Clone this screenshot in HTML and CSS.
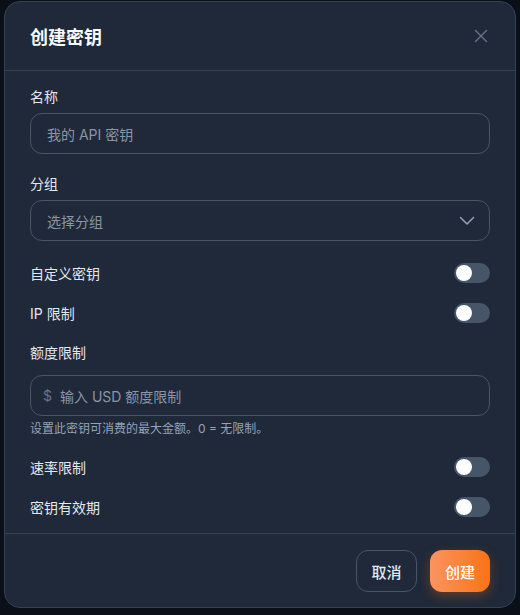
FILE: index.html
```html
<!DOCTYPE html>
<html lang="zh-CN">

<head>
    <meta charset="UTF-8">
    <title>创建密钥</title>
    <link rel="stylesheet" href="styles.css">
</head>

<body>
    <div class="modal">
        <div class="modal-header">
            <h2>创建密钥</h2>
            <button class="close-btn" aria-label="关闭">
                <svg width="14" height="14" viewBox="0 0 14 14" fill="none" stroke="currentColor" stroke-width="1.4" stroke-linecap="round">
                    <path d="M1.5 1.5 L12.5 12.5 M12.5 1.5 L1.5 12.5" />
                </svg>
            </button>
        </div>

        <div class="modal-body">
            <div class="field">
                <label class="field-label">名称</label>
                <div class="input-box">
                    <span class="placeholder">我的 API 密钥</span>
                </div>
            </div>

            <div class="field group">
                <label class="field-label">分组</label>
                <div class="input-box select">
                    <span class="placeholder">选择分组</span>
                    <svg class="chevron" width="16" height="10" viewBox="0 0 16 10" fill="none" stroke="currentColor" stroke-width="1.5" stroke-linecap="round" stroke-linejoin="round">
                        <path d="M1.5 1.5 L8 8 L14.5 1.5" />
                    </svg>
                </div>
            </div>

            <div class="toggle-row">
                <span>自定义密钥</span>
                <span class="toggle"><span class="knob"></span></span>
            </div>

            <div class="toggle-row">
                <span>IP 限制</span>
                <span class="toggle"><span class="knob"></span></span>
            </div>

            <div class="field quota">
                <label class="field-label">额度限制</label>
                <div class="input-box">
                    <span class="prefix">$</span>
                    <span class="placeholder">输入 USD 额度限制</span>
                </div>
                <p class="help">设置此密钥可消费的最大金额。0 = 无限制。</p>
            </div>

            <div class="toggle-row">
                <span>速率限制</span>
                <span class="toggle"><span class="knob"></span></span>
            </div>

            <div class="toggle-row">
                <span>密钥有效期</span>
                <span class="toggle"><span class="knob"></span></span>
            </div>
        </div>

        <div class="modal-footer">
            <button class="btn btn-cancel">取消</button>
            <button class="btn btn-primary">创建</button>
        </div>
    </div>
</body>

</html>
```

FILE: styles.css
```css
body {
    font-family: 'Inter', 'Noto Sans CJK SC', sans-serif;
    background-color: #0b0f18;
    margin: 0;
    padding: 1px 4px 0 4px;
    height: 614px;
    overflow: hidden;
}

.modal {
    background-color: #1f2939;
    border: 1px solid #334155;
    border-radius: 16px;
    height: 607px;
    box-sizing: border-box;
    display: flex;
    flex-direction: column;
}

.modal-header {
    flex-shrink: 0;
    display: flex;
    justify-content: space-between;
    align-items: center;
    height: 68px;
    padding: 0 27px 0 25px;
    border-bottom: 1px solid #334155;
}

.modal-header h2 {
    margin: 0;
    font-size: 18px;
    font-weight: 700;
    color: #f8fafc;
}

.close-btn {
    background: none;
    border: none;
    padding: 0;
    color: #64748b;
    display: flex;
    cursor: pointer;
}

.modal-body {
    flex: 1;
    min-height: 0;
    padding: 16px 25px 0 25px;
    display: flex;
    flex-direction: column;
}

.field {
    display: flex;
    flex-direction: column;
    margin-bottom: 20px;
}

.group {
    margin-bottom: 22px;
}

.field-label {
    font-size: 14px;
    line-height: 20px;
    font-weight: 400;
    color: #e2e8f0;
    margin-bottom: 6px;
}

.quota .field-label {
    margin-bottom: 12px;
}

.input-box {
    height: 41px;
    box-sizing: border-box;
    border: 1px solid #475569;
    border-radius: 12px;
    padding: 0 16px;
    display: flex;
    align-items: center;
    font-size: 14px;
}

.placeholder {
    color: #8a95a6;
}

.select {
    justify-content: space-between;
}

.chevron {
    color: #94a3b8;
    margin-right: -2px;
}

.prefix {
    color: #64748b;
    margin-right: 8px;
    margin-left: -4px;
}

.quota {
    margin-bottom: 0;
}

.help {
    margin: 5px 0 20px 0;
    font-size: 12px;
    line-height: 16px;
    color: #94a3b8;
}

.toggle-row {
    display: flex;
    justify-content: space-between;
    align-items: center;
    height: 20px;
    margin-bottom: 20px;
    font-size: 14px;
    font-weight: 400;
    color: #e2e8f0;
}

.toggle {
    width: 36px;
    height: 20px;
    border-radius: 10px;
    background-color: #475569;
    display: flex;
    align-items: center;
    padding: 0 2px;
    box-sizing: border-box;
}

.knob {
    width: 16px;
    height: 16px;
    border-radius: 50%;
    background-color: #fff;
}

.modal-footer {
    flex-shrink: 0;
    border-top: 1px solid #334155;
    padding: 16px 25px 15px 25px;
    display: flex;
    justify-content: flex-end;
    gap: 13px;
}

.btn {
    height: 42px;
    border-radius: 12px;
    font-family: inherit;
    font-size: 15px;
    font-weight: 500;
    cursor: pointer;
}

.btn-cancel {
    width: 61px;
    background: none;
    border: 1px solid #475569;
    color: #e2e8f0;
}

.btn-primary {
    width: 60px;
    border: none;
    color: #fff;
    background: linear-gradient(90deg, #fb9460 0%, #f97316 100%);
    box-shadow: 0 4px 12px rgba(249, 115, 22, 0.3);
}
```
